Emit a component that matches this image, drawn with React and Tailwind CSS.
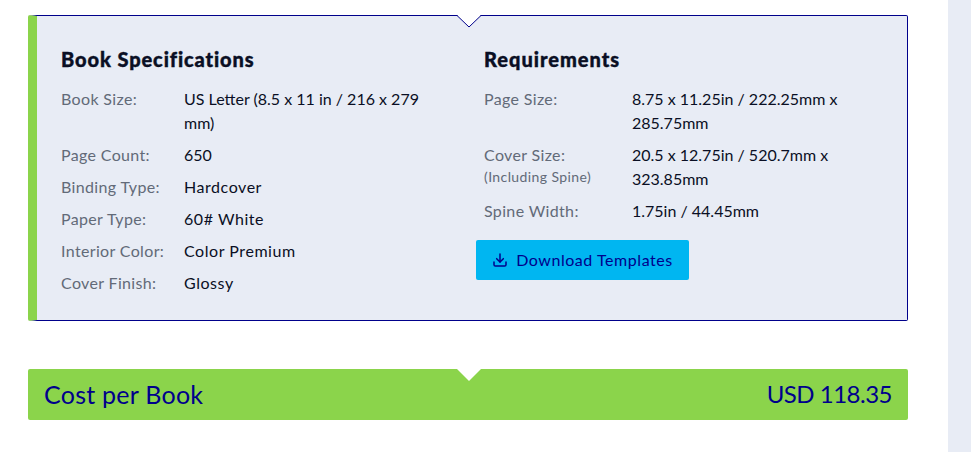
import { Download } from 'lucide-react';

const specs = [
    { label: 'Book Size:', value: 'US Letter (8.5 x 11 in / 216 x 279 mm)' },
    { label: 'Page Count:', value: '650' },
    { label: 'Binding Type:', value: 'Hardcover', wide: true },
    { label: 'Paper Type:', value: '60# White', wide: true },
    { label: 'Interior Color:', value: 'Color Premium', wide: true },
    { label: 'Cover Finish:', value: 'Glossy', wide: true },
];

const requirements = [
    { label: 'Page Size:', value: '8.75 x 11.25in / 222.25mm x 285.75mm' },
    { label: 'Cover Size:', note: '(Including Spine)', value: '20.5 x 12.75in / 520.7mm x 323.85mm' },
    { label: 'Spine Width:', value: '1.75in / 44.45mm' },
];

function Row({ label, note, value, wide, labelWidth }) {
    return (
        <div className="flex">
            <div className={`${labelWidth} shrink-0 text-[#626a78] tracking-[0.35px]`}>
                <div>{label}</div>
                {note && <div className="text-[14px] leading-[20px] tracking-[0.4px]">{note}</div>}
            </div>
            <div className={`flex-1 text-[#0a0f24] ${wide ? 'tracking-[0.55px]' : ''}`}>{value}</div>
        </div>
    );
}

export default function App() {
    return (
        <div className="h-[452px] w-[971px] overflow-hidden bg-white flex font-['Lato',sans-serif] text-[16px] leading-[24px]">
            <main className="w-[948px] shrink-0 pl-[28px] pr-[40px] pt-[15px]">
                {/* Specs panel */}
                <section className="relative h-[306px] flex rounded-[2px] border border-[#00008b] border-l-[9px] border-l-[#8bd44b] bg-[#e8ecf5]">
                    <svg className="absolute left-[420px] -top-px" width="24" height="13" viewBox="0 0 24 13">
                        <path d="M0 0 L12 12 L24 0 Z" fill="#ffffff" />
                        <path d="M0 0.5 L12 12 L24 0.5" fill="none" stroke="#00008b" strokeWidth="1" />
                    </svg>

                    <div className="w-[423px] pl-[24px] pt-[27px]">
                        <h3 className="text-[20px] leading-[32px] font-black text-[#0a0f24] tracking-[0.9px] [-webkit-text-stroke:0.4px_#0a0f24]">Book Specifications</h3>
                        <div className="mt-[12px] flex flex-col gap-[8px] pr-[20px]">
                            {specs.map((row) => (
                                <Row key={row.label} {...row} labelWidth="w-[123px]" />
                            ))}
                        </div>
                    </div>

                    <div className="flex-1 pl-[24px] pt-[27px]">
                        <h3 className="text-[20px] leading-[32px] font-black text-[#0a0f24] tracking-[1px] [-webkit-text-stroke:0.4px_#0a0f24]">Requirements</h3>
                        <div className="mt-[12px] flex flex-col gap-[8px] pr-[50px]">
                            {requirements.map((row) => (
                                <Row key={row.label} {...row} labelWidth="w-[148px]" />
                            ))}
                        </div>
                        <button type="button" className="-ml-[8px] mt-[17px] flex h-[40px] w-[213px] items-center justify-center gap-[8px] rounded-[2px] bg-[#00b6f1] pb-[1px] text-[#00008b] tracking-[0.55px]">
                            <Download className="h-[16px] w-[16px]" strokeWidth={2.25} />
                            <span>Download Templates</span>
                        </button>
                    </div>
                </section>

                {/* Cost bar */}
                <section className="relative mt-[48px] flex h-[51px] items-center justify-between rounded-[2px] bg-[#8bd44b] px-[16px] pb-[2px] text-[#00008b]">
                    <svg className="absolute left-[429px] top-0" width="24" height="12" viewBox="0 0 24 12">
                        <path d="M0 0 L12 12 L24 0 Z" fill="#ffffff" />
                    </svg>
                    <span className="text-[25px] tracking-[0.25px]">Cost per Book</span>
                    <span className="text-[24px] tracking-[-0.5px]">USD 118.35</span>
                </section>
            </main>
            <aside className="flex-1 bg-[#e8ecf5]" />
        </div>
    );
}
